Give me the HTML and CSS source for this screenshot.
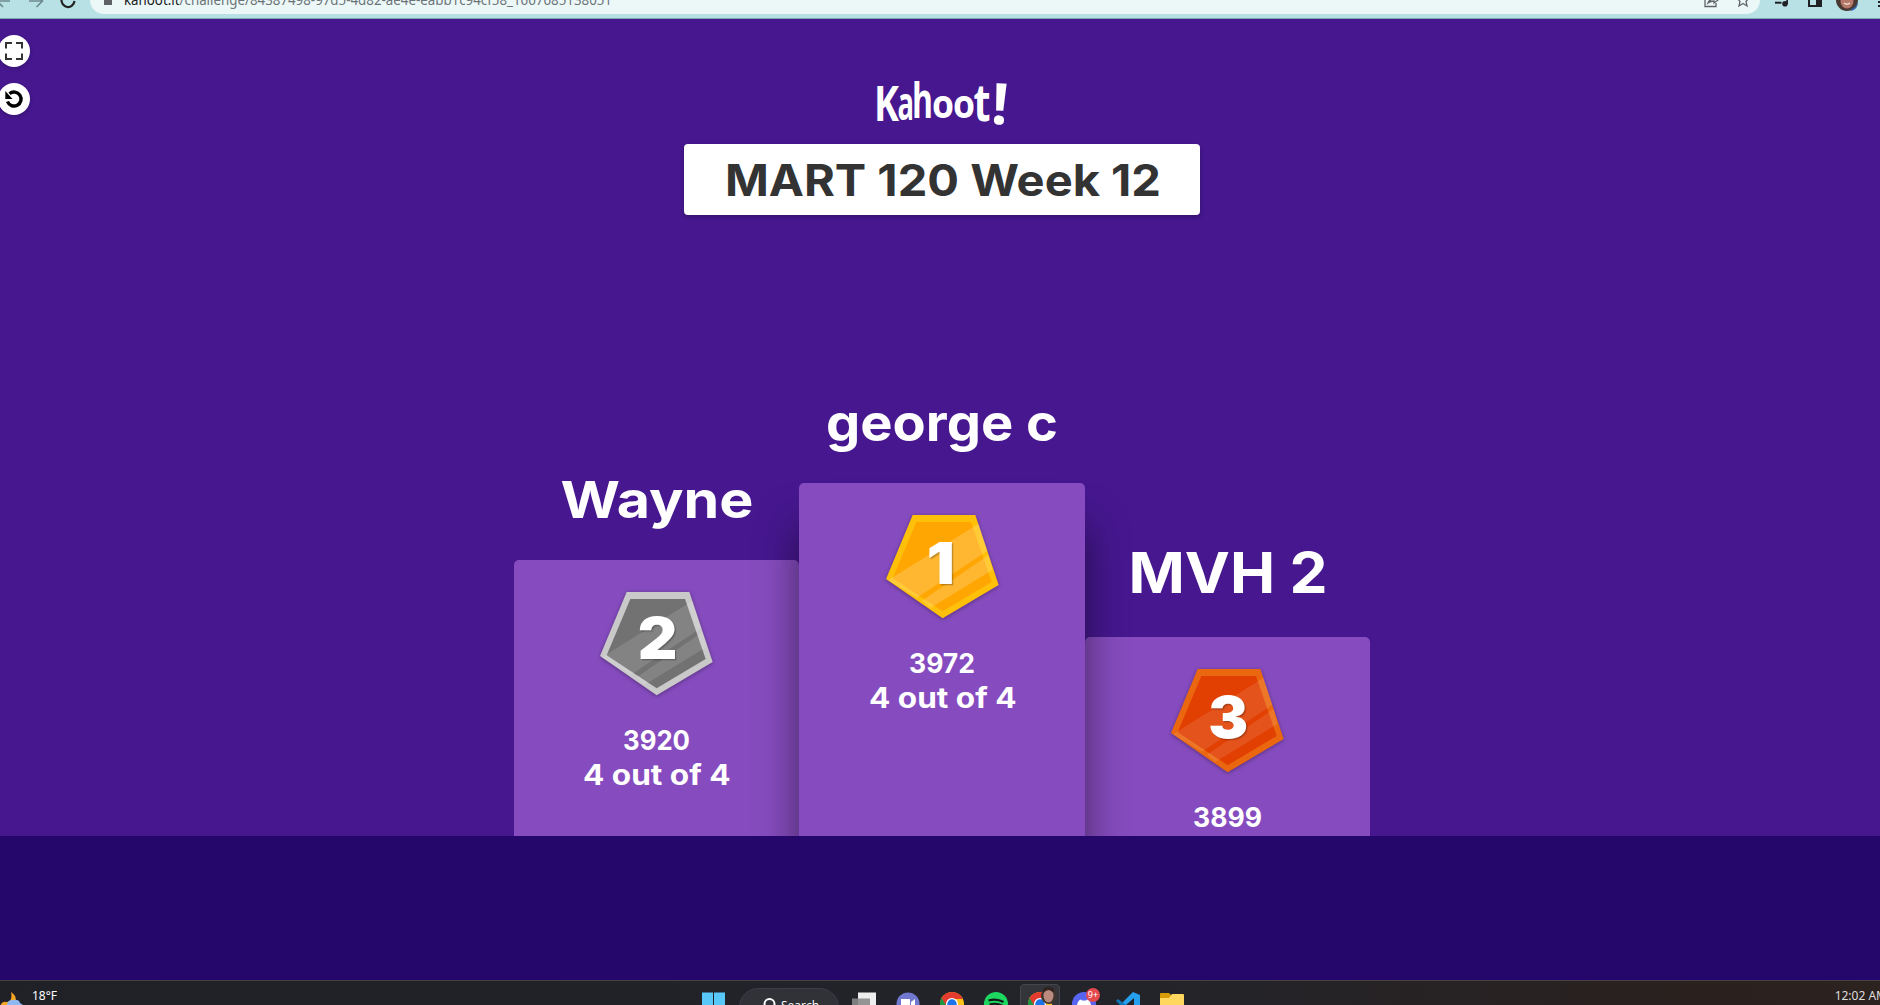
FILE: index.html
```html
<!DOCTYPE html>
<html lang="en">
<head>
<meta charset="utf-8">
<title>Kahoot! podium</title>
<link rel="stylesheet" href="styles.css">
</head>
<body>
<svg width="0" height="0" class="defs">
  <defs>
    <g id="shine" fill="#fff">
      <path d="M6 196 278 26 304 107 93 248z"/>
      <path d="M108 257 307 121 320 164 133 279z"/>
    </g>
    <g id="chrome">
      <circle cx="12" cy="12" r="12" fill="#fbc116"/>
      <path d="M12 12 1.6 6A12 12 0 0 0 12 24z" fill="#229342"/>
      <path d="M1.6 6a12 12 0 0 1 20.8 0L23 7H12l-5 7.500z" fill="#e33b2e"/>
      <circle cx="12" cy="12" r="6" fill="#fff"/>
      <circle cx="12" cy="12" r="4.700" fill="#1a73e8"/>
    </g>
  </defs>
</svg>

<header class="toolbar">
  <svg class="nav" width="90" height="18" viewBox="0 0 90 18" fill="none" stroke-width="1.700">
    <path d="M10 1H-3M2.500-6-3 1l6 6" stroke="#6f8b8f"/>
    <path d="M29 1h13M36-6l6.500 7-6 6" stroke="#6f8b8f"/>
    <path d="M61.500-1a6.500 7 0 0 0 13 2" stroke="#222" stroke-width="2.200"/>
  </svg>
  <div class="address">
    <svg class="lock" width="8" height="8"><path d="M0 0h8v5H0z" fill="#5f6368"/></svg>
    <svg class="url" width="490" height="14"><text x="0" y="5" textLength="488" lengthAdjust="spacingAndGlyphs"><tspan class="host">kahoot.it</tspan>/challenge/84387498-97d5-4d82-ae4e-eabb1c94cf58_1667685138051</text></svg>
    <svg class="addr-icons" width="50" height="10" viewBox="0 0 50 10" fill="none" stroke="#5f6368" stroke-width="1.300">
      <path d="M4.500-2H1v8.500h11V3"/><path d="M4 3c1-3 3-4 6-4v-3l4 4-4 3V1Q6.500 1 4 3z"/>
      <path d="M34-1l2 2.500L35 6l4-2.500L43 6l-1-4.500L44-1"/>
    </svg>
  </div>
  <svg class="tools" width="106" height="14" viewBox="0 0 106 14">
    <path d="M1 1.700h6.500v2H1z" fill="#202124"/><circle cx="11" cy="3.800" r="2.800" fill="#202124"/><path d="M12.300-2h1.700v6h-1.700z" fill="#202124"/>
    <path d="M35 -3v9h12v-9" fill="none" stroke="#202124" stroke-width="2"/><path d="M42-3h6v9h-6z" fill="#202124"/>
    <circle cx="73" cy="0" r="11" fill="#4a3833"/><ellipse cx="73" cy="1" rx="6.500" ry="7.500" fill="#b57869"/><path d="M70 3q3 2.500 6 0" stroke="#f0dcd2" stroke-width="1.500" fill="none"/><path d="M77 9q4-1 6-5l1-2q0 7-7 9z" fill="#2b62a8"/>
    <path d="M104 1h2v2h-2zM104 5h2v2h-2z" fill="#202124"/>
  </svg>
</header>

<main class="stage">
  <div class="controls">
    <button class="round" aria-label="Fullscreen"><svg width="18" height="18" viewBox="0 0 18 18" fill="none" stroke="#333" stroke-width="2"><path d="M1 6.500V1h6M11 1h6v5.500M17 11.500V17h-6M7 17H1v-5.500"/></svg></button>
    <button class="round" aria-label="Replay"><svg width="20" height="20" viewBox="0 0 20 20"><path d="M5.500 4.700a7 7 0 1 1-2 7.800" fill="none" stroke="#000" stroke-width="3.400"/><path d="M1.300 2v8h7.200z"/></svg></button>
  </div>

  <svg class="logo" width="136" height="56" viewBox="0 0 136 56" role="img" aria-label="Kahoot!">
    <g class="logo-letters">
      <text x="0" y="48" font-size="49" textLength="25" lengthAdjust="spacingAndGlyphs">K</text>
      <text x="23.500" y="47" font-size="47" textLength="16.500" lengthAdjust="spacingAndGlyphs">a</text>
      <text x="38" y="45" font-size="49" textLength="21" lengthAdjust="spacingAndGlyphs">h</text>
      <text x="58" y="45" font-size="39" textLength="22" lengthAdjust="spacingAndGlyphs">o</text>
      <text x="79" y="45" font-size="39" textLength="22" lengthAdjust="spacingAndGlyphs">o</text>
      <text x="99.500" y="48" font-size="52" textLength="17" lengthAdjust="spacingAndGlyphs">t</text>
      <text x="117" y="51" font-size="57" textLength="17" lengthAdjust="spacingAndGlyphs" transform="rotate(4 125 40)">!</text>
    </g>
  </svg>

  <h1 class="title"><svg width="516" height="71"><text x="41" y="52" textLength="436" lengthAdjust="spacingAndGlyphs">MART 120 Week 12</text></svg></h1>

  <section class="podium">
    <div class="place second">
      <svg class="name" width="285" height="70"><text x="46.500" y="28" font-size="51" textLength="193" lengthAdjust="spacingAndGlyphs">Wayne</text></svg>
      <div class="block">
        <svg class="medal" width="120" height="110" viewBox="0 0 360 330">
          <path d="M80 0H268L338 210 170 310 0 192z" fill="#c9c9c9"/><path d="M91 21H255L317 201 170 289 20 190z" fill="#727272"/><use href="#shine" opacity=".12"/>
          <text x="113" y="202" textLength="119" lengthAdjust="spacingAndGlyphs">2</text>
        </svg>
        <svg class="score" width="285" height="80"><text x="109" y="29" font-size="26.700" textLength="67" lengthAdjust="spacingAndGlyphs">3920</text><text x="69" y="64" font-size="28" textLength="147.500" lengthAdjust="spacingAndGlyphs">4 out of 4</text></svg>
      </div>
    </div>
    <div class="place first">
      <svg class="name" width="286" height="70"><text x="27" y="28" font-size="51" textLength="232" lengthAdjust="spacingAndGlyphs">george c</text></svg>
      <div class="block">
        <svg class="medal" width="120" height="110" viewBox="0 0 360 330">
          <path d="M80 0H268L338 210 170 310 0 192z" fill="#ffc00a"/><path d="M91 21H255L317 201 170 289 20 190z" fill="#ffa602"/><use href="#shine" opacity=".18"/>
          <text x="122" y="206" textLength="84" lengthAdjust="spacingAndGlyphs">1</text>
        </svg>
        <svg class="score" width="286" height="80"><text x="110" y="29" font-size="26.700" textLength="66" lengthAdjust="spacingAndGlyphs">3972</text><text x="70" y="64" font-size="28" textLength="147.500" lengthAdjust="spacingAndGlyphs">4 out of 4</text></svg>
      </div>
    </div>
    <div class="place third">
      <svg class="name" width="285" height="70"><text x="43.500" y="26" font-size="56.500" textLength="199" lengthAdjust="spacingAndGlyphs">MVH 2</text></svg>
      <div class="block">
        <svg class="medal" width="120" height="110" viewBox="0 0 360 330">
          <path d="M80 0H268L338 210 170 310 0 192z" fill="#eb670f"/><path d="M91 21H255L317 201 170 289 20 190z" fill="#e23f02"/><use href="#shine" opacity=".1"/>
          <text x="112" y="208" textLength="120" lengthAdjust="spacingAndGlyphs">3</text>
        </svg>
        <svg class="score" width="285" height="80"><text x="108" y="29" font-size="26.700" textLength="69" lengthAdjust="spacingAndGlyphs">3899</text></svg>
      </div>
    </div>
  </section>
</main>
<div class="floor"></div>

<footer class="taskbar">
  <div class="weather">
    <svg width="24" height="24" viewBox="0 0 24 24"><path d="M11 11q8 5 3 14H0Q2 20 6 21q7 0 5-10z" fill="#f5a623"/><path d="M7 24q0-5 6-5 6-1 7 3l3 2z" fill="#8fb8f0"/></svg>
    <span>18°F</span>
  </div>
  <div class="apps">
    <svg width="24" height="24" viewBox="0 0 24 24"><path d="M0 11.500h11V24H0zM12 11.500h11V24H12z" fill="#58c8f8"/></svg>
    <div class="search"><svg width="14" height="17" viewBox="0 0 14 17" fill="none" stroke="#fff" stroke-width="2"><circle cx="7.500" cy="8" r="5"/><path d="m4 12-4 5"/></svg><span>Search</span></div>
    <svg class="app taskview" width="24" height="24" viewBox="0 0 24 24"><path d="M6 11.500h18V24H6z" fill="#eee"/><path d="M0 17.500h18V24H0z" fill="#8a8a8a" opacity=".9"/></svg>
    <svg class="app chat" width="24" height="24" viewBox="0 0 24 24"><circle cx="12" cy="23" r="11.500" fill="#7078cf"/><path d="M5 18h9v6H5zM15 21l4-3v6h-4z" fill="#fff"/></svg>
    <svg class="app" width="24" height="24" viewBox="0 0 24 24"><use href="#chrome" y="11"/></svg>
    <svg class="app" width="24" height="24" viewBox="0 0 24 24"><circle cx="12" cy="23" r="12" fill="#1ed760"/><path d="M4.500 19.500q8-2.500 15 1.500M5.500 23.500q7-2 13 1.200" fill="none" stroke="#15181a" stroke-width="2.200"/></svg>
    <div class="active"><svg width="30" height="24" viewBox="0 0 30 24"><use href="#chrome" y="11"/><circle cx="21" cy="15" r="8" fill="#3f352f"/><ellipse cx="20.500" cy="14.500" rx="5" ry="7" fill="#b98a7d"/><path d="M15.500 12q5-6 10 0l.5-4q-5.500-5-11 0z" fill="#302420"/></svg></div>
    <div class="app discord"><svg width="24" height="24" viewBox="0 0 24 24"><circle cx="12" cy="23" r="12" fill="#5865f2"/><path d="M5 24q1-5 4-5.500l1 1h4l1-1q3 .5 4 5.500z" fill="#fff"/></svg><span class="badge">9+</span></div>
    <svg class="app code" width="24" height="24" viewBox="0 0 24 24"><path d="M17 11l7 3v10H4z" fill="#24a0ee"/><path d="M18 17v7h-8z" fill="#212328"/><path d="M0 20l2-2 8 6H4z" fill="#0b76b8"/></svg>
    <svg class="app" width="24" height="24" viewBox="0 0 24 24"><path d="M0 24V13q0-1 1-1h8l3 3v9z" fill="#d79b08"/><path d="M0 24v-7h9l3-4h11q1 0 1 1v10z" fill="#ffd75e"/></svg>
  </div>
  <span class="clock">12:02 AM</span>
</footer>
</body>
</html>
```

FILE: styles.css
```css
* { box-sizing: border-box; }
body {
  margin: 0;
  width: 1880px;
  height: 1005px;
  overflow: hidden;
  display: flex;
  flex-direction: column;
  background: #46178f;
  font-family: "Inter", "Liberation Sans", sans-serif;
}
svg { display: block; flex: none; }
.defs { display: none; }

.toolbar {
  height: 19px;
  flex: none;
  display: flex;
  align-items: flex-start;
  background: #b8e1e5;
  border-bottom: 1px solid #7fa9b2;
  overflow: hidden;
}
.address {
  width: 1672px;
  height: 14px;
  display: flex;
  background: #ecf8f8;
  border-radius: 0 0 14px 14px;
  padding-left: 14px;
}
.url { margin-left: 12px; }
.url text { font: 14px "Noto Sans", sans-serif; fill: #6b7377; }
.url .host { fill: #202124; }
.addr-icons { margin-left: 1090px; }
.tools { margin-left: 14px; }

.stage {
  height: 817px;
  flex: none;
  position: relative;
  display: flex;
  flex-direction: column;
  align-items: center;
  padding-left: 4px;
  overflow: hidden;
}
.controls {
  position: absolute;
  left: -2px;
  top: 16px;
  display: flex;
  flex-direction: column;
  gap: 16px;
}
.round {
  width: 32px;
  height: 32px;
  padding: 0;
  border: 0;
  border-radius: 50%;
  background: #fff;
  display: grid;
  place-items: center;
  box-shadow: 0 2px 4px rgba(0, 0, 0, .2);
}
.logo { margin: 54px 0 15px; }
.logo-letters { font-family: "Open Sans", sans-serif; font-weight: 700; fill: #fff; }
.title {
  margin: 0;
  background: #fff;
  border-radius: 4px;
  box-shadow: 0 2px 4px rgba(0, 0, 0, .25);
}
.title text { font: 700 44px "Inter", sans-serif; fill: #333; }

.podium {
  margin-top: 198px;
  height: 423px;
  flex: none;
  display: flex;
}
.place { display: flex; flex-direction: column; }
.second { padding-top: 77px; width: 285px; }
.first { width: 286px; z-index: 1; }
.third { padding-top: 154px; width: 285px; }
.name { overflow: visible; position: relative; z-index: 2; }
.name text { font-family: "Inter", sans-serif; font-weight: 700; fill: #fff; }
.block {
  flex: 1;
  background: #864cbf;
  border-radius: 5px 5px 0 0;
  padding-top: 32px;
}
.first .block { box-shadow: 0 44px 40px rgba(0, 0, 0, .5); }
.medal { margin-left: 85.500px; overflow: visible; filter: drop-shadow(0 1px 2px rgba(0, 0, 0, .35)); }
.first .medal { margin-left: 86.500px; }
.medal text {
  font: 900 173px "Inter", sans-serif;
  fill: #fff;
  filter: drop-shadow(4px 4px 2px rgba(0, 0, 0, .25));
}
.score { margin-top: 19px; }
.score text { font-family: "Inter", sans-serif; font-weight: 700; fill: #fff; }

.floor { height: 144px; flex: none; background: #25076b; }

.taskbar {
  height: 25px;
  flex: none;
  display: flex;
  border-top: 1px solid #444148;
  background: linear-gradient(90deg, #202127 0, #23242a 60%, #2a211f 90%, #2c221f 100%);
  color: #fff;
  overflow: hidden;
}
.weather { width: 701px; display: flex; font: 12px/29px "Noto Sans", sans-serif; }
.weather span { margin-left: 8px; }
.apps { display: flex; }
.apps > svg:first-child { margin-left: 1px; }
.search {
  width: 100px;
  height: 38px;
  margin: 7px 13px 0 13px;
  padding: 10px 0 0 22px;
  border: 1px solid #3c3e45;
  border-radius: 19px;
  background: #303238;
  display: flex;
  gap: 5px;
  font: 12px/13px "Open Sans", sans-serif;
}
.search svg { margin-top: -3px; }
.app { margin-right: 20px; }
.active {
  width: 40px;
  height: 40px;
  margin: 3px 12px 0 -8px;
  padding-left: 7px;
  border: 1px solid #44464c;
  border-radius: 4px;
  background: #33353b;
}
.active svg { margin-top: -4px; }
.discord { position: relative; width: 24px; }
.badge {
  position: absolute;
  left: 14px;
  top: 7px;
  width: 14px;
  height: 14px;
  border-radius: 50%;
  background: #e5484d;
  font: 9px/14px "Noto Sans", sans-serif;
  text-align: center;
}
.clock {
  margin-left: auto;
  margin-right: -7px;
  font: 12px/29px "Noto Sans", sans-serif;
  white-space: nowrap;
  color: #ddd;
}
```
